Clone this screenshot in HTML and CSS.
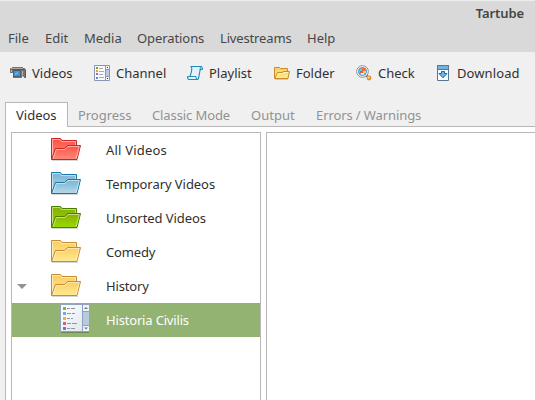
FILE: index.html
```html
<!DOCTYPE html>
<html lang="en">
<head>
<meta charset="utf-8">
<title>Tartube</title>
<link rel="stylesheet" href="styles.css">
</head>
<body>
<svg class="defs" width="0" height="0">
<defs>
<linearGradient id="redfill" x2="0" y2="1"><stop stop-color="#ff5145"/><stop offset="1" stop-color="#ff8b7b"/></linearGradient>
<linearGradient id="bluefill" x2="0" y2="1"><stop stop-color="#78b2d1"/><stop offset="1" stop-color="#b7d9e9"/></linearGradient>
<linearGradient id="greenfill" x2="0" y2="1"><stop stop-color="#88ad00"/><stop offset="1" stop-color="#9bdc00"/></linearGradient>
<linearGradient id="yellowfill" x2="0" y2="1"><stop stop-color="#f8cd63"/><stop offset="1" stop-color="#ffeb91"/></linearGradient>
<linearGradient id="paper" x2="1" y2="1"><stop stop-color="#fff"/><stop offset="1" stop-color="#dce4ef"/></linearGradient>
<symbol id="folder" viewBox="0 0 32 26">
<path d="M2 23.5H28" stroke="#000" stroke-opacity=".16"/>
<path d="M1.5 22.5V1.5H10.5L12 3.5H26.5V9"/>
<path d="M2.5 20V2.5H10L11.5 4.5H25.5V8" fill="none" stroke="#fff" stroke-opacity=".5"/>
<path d="M1.5 22.5L5.5 11.5H14.5L17.5 8.5H30.5L27 22.5Z"/>
<path d="M3.2 21.2L6.3 12.5H15L18 9.5H29.2L26.2 21.5" fill="none" stroke="#fff" stroke-opacity=".5"/>
</symbol>
<symbol id="list" viewBox="0 0 30 29">
<path d="M1 28.5H29" stroke="#000" stroke-opacity=".25"/>
<path d="M.5.5H29.5V27.5H.5Z" fill="url(#paper)" stroke="#93a3bd"/>
<path d="M23 1H29V7H23ZM23 22H29V27H23Z" fill="#f1f5fa"/>
<path d="M22.5 1V27M29 7.5H23M29 21.5H23" stroke="#8ba0bd"/>
<path d="M23 8H29V21H23Z" fill="#b8cbdc"/>
<path d="M24 5L26 3L28 5ZM24 23.5H28L26 25.5Z" fill="#777"/>
<path d="M3 3h3v3H3z" fill="#82b04b"/><path d="M3 8h3v3H3z" fill="#7aaad2"/><path d="M3 13h3v3H3z" fill="#f5ab3f"/><path d="M3 18h3v3H3z" fill="#ea5a62"/><path d="M3 23h3v3H3z" fill="#9064ce"/>
<path d="M7 4.5h3m1 0h4M7 9.5h4m1 0h3M7 14.5h3m1 0h2M7 19.5h4m1 0h5M7 24.5h3m1 0h4" stroke="#929499"/>
</symbol>
</defs>
</svg>
<header class="header">
<div class="title">Tartube</div>
<nav class="menu"><span class="w-file">File</span><span class="w-edit">Edit</span><span class="w-media">Media</span><span class="w-operations">Operations</span><span class="w-livestreams">Livestreams</span><span class="w-help">Help</span></nav>
</header>
<div class="toolbar">
<div class="tool"><svg width="16" height="16"><path d="M0 3H2V2H13V3H15V4H16V13H14V12L12 11V13H3V8H0Z" fill="#757575"/><path d="M1 3.5H13" stroke="#a8a8a8"/><path d="M2 4.5H14" stroke="#555"/><path d="M4 6H10V11H4Z" fill="#3a97de"/><path d="M3.5 5.5H10.5V11.5H3.5Z" fill="none" stroke="#5b5b5b"/><path d="M5 9.5L8 7.5" stroke="#79cdff"/><path d="M12.5 6V10M1.5 5V7" stroke="#b5b5b5"/><path d="M15.5 5V12" stroke="#555"/></svg><span class="w-videos">Videos</span></div>
<div class="tool"><svg width="16" height="16"><path d="M.5.5H15.5V15.5H.5Z" fill="#f7f9fc" stroke="#8798b3"/><path d="M11.5 1V15M12 4.5h3M12 11.5h3" stroke="#8798b3"/><path d="M12 5h3v6h-3z" fill="#b6cadc"/><path d="M2 2h2v2H2z" fill="#77aa32"/><path d="M2 5h2v2H2z" fill="#f29c22"/><path d="M2 8h2v2H2z" fill="#9a62d0"/><path d="M2 12h2v2H2z" fill="#4a8dd0"/><path d="M5 3.5h4M5 6.5h5M5 9.5h4M5 12.5h5" stroke="#aaa"/><path d="M13 2h1v1h-1zM13 13h1v1h-1z" fill="#333"/></svg><span class="w-channel">Channel</span></div>
<div class="tool"><svg width="16" height="16"><path d="M3.5 1.5H14Q15.7 2 15.3 4.5H13.2L11.5 13.5Q11 14.7 9.5 14.5H2Q.2 14 .8 11.5H3Q4.8 7 4.8 3.5Q4.8 1.8 3.5 1.5Z" fill="#e3f2f7" stroke="#2389b8" stroke-width="1.1"/><path d="M1 11.5H9Q8.8 14.3 10.5 14.2M13.2 4.5Q13 2 14 1.5" fill="none" stroke="#2389b8"/></svg><span class="w-playlist">Playlist</span></div>
<div class="tool"><svg width="16" height="16"><path d="M1 14.5H14" stroke="#ccc"/><path d="M.5 13.5V2.5H5.5L6.5 3.5H13.5V6.5H15.5L14 13.5Z" fill="url(#yellowfill)" stroke="#c98b2c"/><path d="M1 13L3.5 7.5H8L9.5 6.5H15" fill="none" stroke="#c98b2c"/><path d="M3 11.5L4.5 8.5H9L10 7.5H14" fill="none" stroke="#fff5b5"/></svg><span class="w-folder">Folder</span></div>
<div class="tool"><svg width="16" height="16"><path d="M10 10L11.5 11.5" stroke="#777" stroke-width="3"/><circle cx="13" cy="13" r="2.4" fill="#d98a24"/><circle cx="12.7" cy="12.5" r="1.3" fill="#ffd267"/><circle cx="6.5" cy="6.5" r="5.8" fill="#fff" stroke="#8a8a8a"/><circle cx="6.5" cy="6.5" r="4" fill="#6cc2f2" stroke="#3c97d2"/><path d="M6 3H9V6H6Z" fill="#f16c3a"/><path d="M4 6H7V8H4Z" fill="#f4552c"/><path d="M7 6H10V8H7Z" fill="#ffd34d"/><path d="M5 8H8V9.5H5Z" fill="#fff"/></svg><span class="w-check">Check</span></div>
<div class="tool"><svg width="15" height="16"><path d="M1.5.5H12.5V15.5H1.5Z" fill="#f8fbff" stroke="#5a7495"/><path d="M2 1H12V4H2Z" fill="#6ab4df"/><path d="M1 4.5H13M1 .5H13" stroke="#3d80b0"/><path d="M5.5 6.5H8.5V8.5H11L7 12.8L3 8.5H5.5Z" fill="#69b8ea" stroke="#1d67a3"/></svg><span class="w-download">Download</span></div>
</div>
<main class="notebook">
<div class="tabs"><div class="tab active"><span class="w-videos">Videos</span></div><div class="tab"><span class="w-progress">Progress</span></div><div class="tab"><span class="w-classic">Classic Mode</span></div><div class="tab"><span class="w-output">Output</span></div><div class="tab"><span class="w-errors">Errors / Warnings</span></div></div>
<div class="panes">
<section class="tree">
<div class="row"><svg class="icon red"><use href="#folder"/></svg><span class="w-all">All Videos</span></div>
<div class="row"><svg class="icon blue"><use href="#folder"/></svg><span class="w-temp">Temporary Videos</span></div>
<div class="row"><svg class="icon green"><use href="#folder"/></svg><span class="w-unsorted">Unsorted Videos</span></div>
<div class="row"><svg class="icon yellow"><use href="#folder"/></svg><span class="w-comedy">Comedy</span></div>
<div class="row expanded"><svg class="arrow" width="10" height="5"><path d="M0 0H10L5 5Z"/></svg><svg class="icon yellow"><use href="#folder"/></svg><span class="w-history">History</span></div>
<div class="row selected"><svg class="list-icon"><use href="#list"/></svg><span class="w-civilis">Historia Civilis</span></div>
</section>
<section class="content"></section>
</div>
</main>
</body>
</html>
```
FILE: styles.css
```css
* { box-sizing: border-box; }
body { margin: 0; height: 400px; overflow: hidden; display: flex; flex-direction: column; background: #f0f0f0; color: #303030; font: 13px/18px "Noto Sans", sans-serif; }
.defs { position: absolute; }
span { white-space: nowrap; flex: none; }
svg { flex: none; display: block; }
.header { height: 52px; border-top: 1px solid #ededed; background: #d9d9d9; color: #464646; }
.title { height: 28px; padding: 3px 11px 0; text-align: right; font-weight: 600; font-size: 13px; letter-spacing: -.1px; }
.menu { display: flex; gap: 16px; padding-left: 8px; }
.menu span { display: block; }
.toolbar { display: flex; gap: 21px; height: 50px; padding: 13px 0 0 10px; }
.tool { display: flex; gap: 6px; height: 16px; align-items: center; }
.notebook { flex: 1; display: flex; flex-direction: column; margin-left: 5px; border-left: 1px solid #b8b8b8; background: #fff; }
.tabs { display: flex; height: 25px; background: #f0f0f0; border-bottom: 1px solid #b8b8b8; color: #929292; }
.tab { padding: 4px 11px 0 10px; height: 24px; }
.tab.active { height: 25px; border-top: 1px solid #b8b8b8; border-right: 1px solid #b8b8b8; padding: 3px 10px 0; background: #fff; color: #303030; }
.tab span { display: block; }
.panes { flex: 1; display: flex; gap: 5px; padding: 5px 0 0 5px; }
.tree { width: 250px; border: 1px solid #b8b8b8; border-bottom: 0; }
.content { flex: 1; border: 1px solid #b8b8b8; border-width: 1px 0 0 1px; }
.row { display: flex; align-items: center; height: 34px; padding-left: 38px; }
.icon { width: 32px; height: 26px; margin-right: 24px; }
.red { fill: url(#redfill); stroke: #c62828; }
.blue { fill: url(#bluefill); stroke: #1778ad; }
.green { fill: url(#greenfill); stroke: #438000; }
.yellow { fill: url(#yellowfill); stroke: #c98b36; }
.expanded { padding-left: 5px; }
.arrow { margin-right: 23px; fill: #929292; }
.selected { background: #92b372; color: #fff; padding-left: 48px; }
.list-icon { width: 30px; height: 29px; margin: 0 16px 3px 0; }
.w-file { width: 21px; } .w-edit { width: 23px; } .w-media { width: 37px; } .w-operations { width: 67px; letter-spacing: -.08px; } .w-livestreams { width: 71px; letter-spacing: -.15px; } .w-help { width: 28px; }
.w-videos { width: 41px; } .w-channel { width: 50px; } .w-playlist { width: 44px; } .w-folder { width: 39px; } .w-check { width: 37px; } .w-download { width: 63px; letter-spacing: .1px; }
.w-progress { width: 53px; letter-spacing: -.05px; } .w-classic { width: 78px; letter-spacing: -.1px; } .w-output { width: 44px; } .w-errors { width: 105px; letter-spacing: -.1px; }
.w-all { letter-spacing: .2px; } .w-temp { letter-spacing: -.06px; } .w-unsorted { letter-spacing: -.07px; } .w-civilis { letter-spacing: -.17px; } .w-comedy, .w-history { letter-spacing: -.15px; }
```
